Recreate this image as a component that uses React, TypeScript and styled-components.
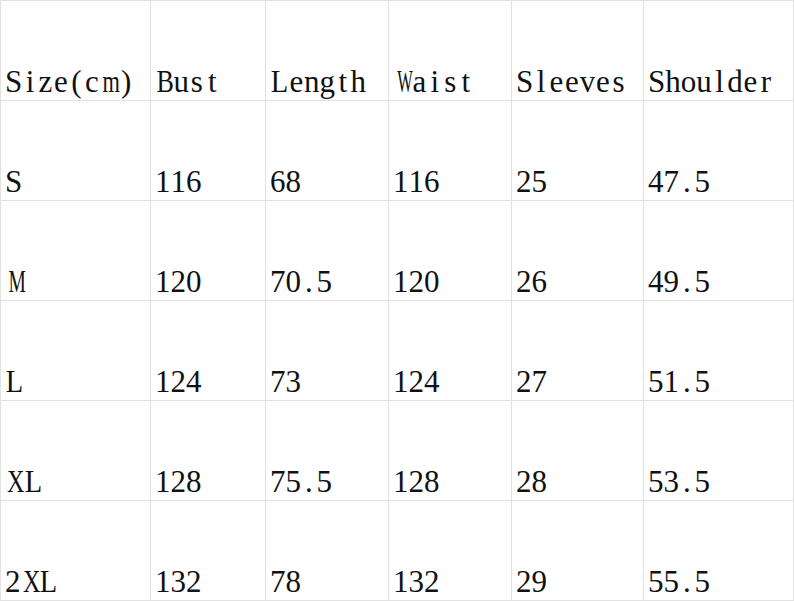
import React from 'react';
import styled, { createGlobalStyle } from 'styled-components';

const GlobalStyle = createGlobalStyle`
  body {
    margin: 0;
    background: #ffffff;
  }
`;

const COLUMNS = [150, 115, 123, 123, 132, 150];

const HEADERS = ['Size(cm)', 'Bust', 'Length', 'Waist', 'Sleeves', 'Shoulder'];

const ROWS = [
  ['S', '116', '68', '116', '25', '47.5'],
  ['M', '120', '70.5', '120', '26', '49.5'],
  ['L', '124', '73', '124', '27', '51.5'],
  ['XL', '128', '75.5', '128', '28', '53.5'],
  ['2XL', '132', '78', '132', '29', '55.5'],
];

// Times widths (em) of the glyphs wider than half an em; the widest are
// squeezed so the text keeps the half-width look of the original chart.
// W is given a bit extra since its ink runs past its advance.
const WIDE: Record<string, number> = {
  m: 0.778,
  M: 0.889,
  W: 1.06,
  w: 0.722,
  X: 0.722,
  L: 0.611,
  B: 0.667,
  S: 0.556,
};

const MAX_GLYPH = 0.6;

const SizeChart = styled.div`
  display: grid;
  grid-template-columns: ${COLUMNS.map((w) => `${w}px`).join(' ')};
  grid-auto-rows: 100px;
  width: max-content;
  border-right: 1px solid #e2e2e2;
  border-bottom: 1px solid #e2e2e2;
`;

const Cell = styled.div`
  box-sizing: border-box;
  display: flex;
  align-items: flex-end;
  border-top: 1px solid #e2e2e2;
  border-left: 1px solid #e2e2e2;
  padding-left: 4px;
  font-family: 'Liberation Serif', 'Times New Roman', serif;
  font-size: 31px;
  line-height: normal;
  color: #111;
  white-space: nowrap;
`;

const Glyph = styled.span<{ $width: number; $scale: number }>`
  display: inline-block;
  width: ${({ $width }) => $width}em;
  text-align: center;
  transform: scaleX(${({ $scale }) => $scale});
`;

const MonoText: React.FC<{ text: string }> = ({ text }) => (
  <>
    {text.split('').map((ch, i) => {
      const w = WIDE[ch] ?? 0.5;
      const width = Math.min(w, MAX_GLYPH);
      const scale = w > MAX_GLYPH ? (MAX_GLYPH - 0.04) / w : 1;
      return (
        <Glyph key={i} $width={width} $scale={Number(scale.toFixed(2))}>
          {ch}
        </Glyph>
      );
    })}
  </>
);

const App: React.FC = () => {
  return (
    <>
      <GlobalStyle />
      <SizeChart>
        {HEADERS.map((h) => (
          <Cell key={h}>
            <MonoText text={h} />
          </Cell>
        ))}
        {ROWS.map((row) =>
          row.map((value, i) => (
            <Cell key={`${row[0]}-${i}`}>
              <MonoText text={value} />
            </Cell>
          ))
        )}
      </SizeChart>
    </>
  );
};

export default App;
